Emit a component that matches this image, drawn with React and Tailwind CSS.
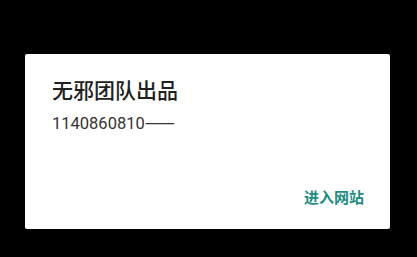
import React from "react";

const App = () => {
	return (
		<div className="w-[417px] h-[257px] bg-black pt-[54px] pl-[25px] font-['Noto_Sans_CJK_SC',sans-serif]">
			<div className="w-[365px] h-[175px] bg-white rounded-[2px] flex flex-col pl-[27px] pr-[26px] pt-[21px]">
				{/* Title */}
				<h2 className="text-[21px] leading-[28px] font-medium text-[#212121]">
					无邪团队出品
				</h2>

				{/* Message */}
				<p className="mt-[6px] text-[16.5px] leading-[24px] text-[#333333] font-['Roboto',sans-serif]">
					1140860810
					<span className="text-[18px] font-['Noto_Sans_CJK_SC',sans-serif]">——</span>
				</p>

				{/* Action */}
				<div className="mt-auto mb-[21px] flex justify-end">
					<button className="text-[15px] leading-[22px] font-bold text-[#1f8c80]">
						进入网站
					</button>
				</div>
			</div>
		</div>
	);
};

export default App;
